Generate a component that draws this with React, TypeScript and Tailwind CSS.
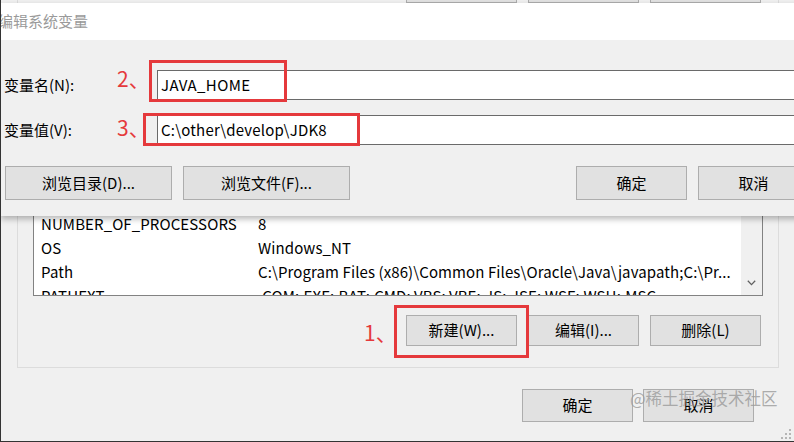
const font = { fontFamily: '"Noto Sans CJK SC", "Noto Sans", sans-serif' };

const hiddenRows = [
  ["ComSpec", "C:\\Windows\\system32\\cmd.exe"],
  ["configsetroot", "C:\\Windows\\ConfigSetRoot"],
  ["DriverData", "C:\\Windows\\System32\\Drivers\\DriverData"],
  ["FPS_BROWSER_APP_PROFILE_STRING", "Internet Explorer"],
  ["FPS_BROWSER_USER_PROFILE_STRING", "Default"],
  ["MAVEN_HOME", "C:\\other\\develop\\maven"],
  ["MYSQL_HOME", "C:\\other\\develop\\mysql"],
  ["NODE_PATH", "C:\\other\\develop\\nodejs"],
];

const rows = [
  ["NUMBER_OF_PROCESSORS", "8"],
  ["OS", "Windows_NT"],
  ["Path", "C:\\Program Files (x86)\\Common Files\\Oracle\\Java\\javapath;C:\\Pr..."],
  ["PATHEXT", ".COM;.EXE;.BAT;.CMD;.VBS;.VBE;.JS;.JSE;.WSF;.WSH;.MSC"],
];

const WinButton = ({ label, className = "" }: { label: string; className?: string }) => (
  <div
    className={`flex items-center justify-center bg-[#e1e1e1] border border-[#adadad] text-[15px] text-black ${className}`}
  >
    {label}
  </div>
);

const RedBox = ({ className }: { className: string }) => (
  <div className={`absolute border-[3px] border-[#e5393c] ${className}`} />
);

export default function App() {
  return (
    <div className="relative w-[794px] h-[442px] overflow-hidden bg-[#f0f0f0] border-l border-b border-[#333333]" style={font}>
      {/* system variables window behind */}
      <div className="ml-[16px] w-[762px] h-[368px] border-x border-b border-[#dcdcdc] flex flex-col">
        <div className="h-[3px] flex justify-end gap-[11px] pr-[17px] overflow-hidden">
          <div className="w-[111px] h-[3px] bg-[#e1e1e1] border-x border-b border-[#adadad]" />
          <div className="w-[111px] h-[3px] bg-[#e1e1e1] border-x border-b border-[#adadad]" />
          <div className="w-[111px] h-[3px] bg-[#e1e1e1] border-x border-b border-[#adadad]" />
        </div>

        <div className="mt-[16px] ml-[15px] w-[730px] h-[277px] border border-[#828282] bg-white flex overflow-hidden">
          <div className="flex-1 overflow-hidden pl-[7px] text-[15px] tracking-[0.1px] text-black">
            {[...hiddenRows, ...rows].map(([name, value]) => (
              <div key={name} className="h-[24px] flex items-center whitespace-nowrap">
                <span className="w-[217px] shrink-0 overflow-hidden">{name}</span>
                <span>{value}</span>
              </div>
            ))}
          </div>
          <div className="w-[21px] bg-[#f0f0f0] flex flex-col justify-end items-center pb-[9px]">
            <svg width="9" height="6" viewBox="0 0 9 6" fill="none">
              <path d="M0.8 0.8 L4.5 4.6 L8.2 0.8" stroke="#606060" strokeWidth="1.3" />
            </svg>
          </div>
        </div>

        <div className="mt-[19px] flex justify-end gap-[11px] pr-[17px]">
          <WinButton label="新建(W)..." className="w-[111px] h-[31px]" />
          <WinButton label="编辑(I)..." className="w-[111px] h-[31px]" />
          <WinButton label="删除(L)" className="w-[111px] h-[31px]" />
        </div>
      </div>

      <div className="mt-[21px] flex justify-end gap-[10px] pr-[40px]">
        <WinButton label="确定" className="w-[111px] h-[33px]" />
        <WinButton label="取消" className="w-[111px] h-[33px]" />
      </div>

      {/* annotation 1 */}
      <RedBox className="left-[393px] top-[305px] w-[135px] h-[53px]" />
      <span className="absolute left-[363px] top-[322px] text-[21px] leading-none text-[#e5393c]">1、</span>

      {/* watermark */}
      <span className="absolute left-[629px] top-[390px] text-[16.5px] leading-none text-[#9a9a9a]/80 whitespace-nowrap">
        @稀土掘金技术社区
      </span>

      {/* resize grip */}
      <svg className="absolute left-[780px] top-[429px]" width="11" height="11" viewBox="0 0 11 11">
        {[
          [8, 0],
          [4, 4],
          [8, 4],
          [0, 8],
          [4, 8],
          [8, 8],
        ].map(([x, y]) => (
          <rect key={`${x}-${y}`} x={x} y={y} width="2" height="2" fill="#b5b5b5" />
        ))}
      </svg>

      {/* edit dialog on top */}
      <div className="absolute left-0 top-[3px] w-[820px] shadow-[0_3px_6px_rgba(0,0,0,0.28)]">
        <div className="h-[37px] bg-white flex items-center">
          <span className="-ml-[3px] text-[15px] text-[#9a9a9a]">编辑系统变量</span>
        </div>
        <div className="h-[176px] bg-[#f0f0f0] pl-[3px] pr-[12px] pt-[30px] text-[15px] text-black">
          <div className="flex items-center h-[30px]">
            <span className="w-[153px] shrink-0">变量名(N):</span>
            <div className="flex-1 h-[30px] bg-white border border-[#6a6a6a] flex items-center pl-[3px] tracking-[0.4px]">JAVA_HOME</div>
          </div>
          <div className="mt-[15px] flex items-center h-[30px]">
            <span className="w-[153px] shrink-0">变量值(V):</span>
            <div className="flex-1 h-[30px] bg-white border border-[#6a6a6a] flex items-center pl-[3px] tracking-[0.2px]">
              C:\other\develop\JDK8
            </div>
          </div>
          <div className="mt-[21px] flex items-center pl-[1px]">
            <WinButton label="浏览目录(D)..." className="w-[167px] h-[34px]" />
            <WinButton label="浏览文件(F)..." className="ml-[11px] w-[167px] h-[34px]" />
            <div className="flex-1" />
            <WinButton label="确定" className="w-[111px] h-[34px]" />
            <WinButton label="取消" className="ml-[11px] w-[111px] h-[34px]" />
          </div>
        </div>

        <RedBox className="left-[148px] top-[57px] w-[138px] h-[42px]" />
        <span className="absolute left-[116px] top-[65px] text-[21px] leading-none text-[#e5393c]">2、</span>
        <RedBox className="left-[142px] top-[110px] w-[217px] h-[33px]" />
        <span className="absolute left-[116px] top-[114px] text-[21px] leading-none text-[#e5393c]">3、</span>
      </div>
    </div>
  );
}
